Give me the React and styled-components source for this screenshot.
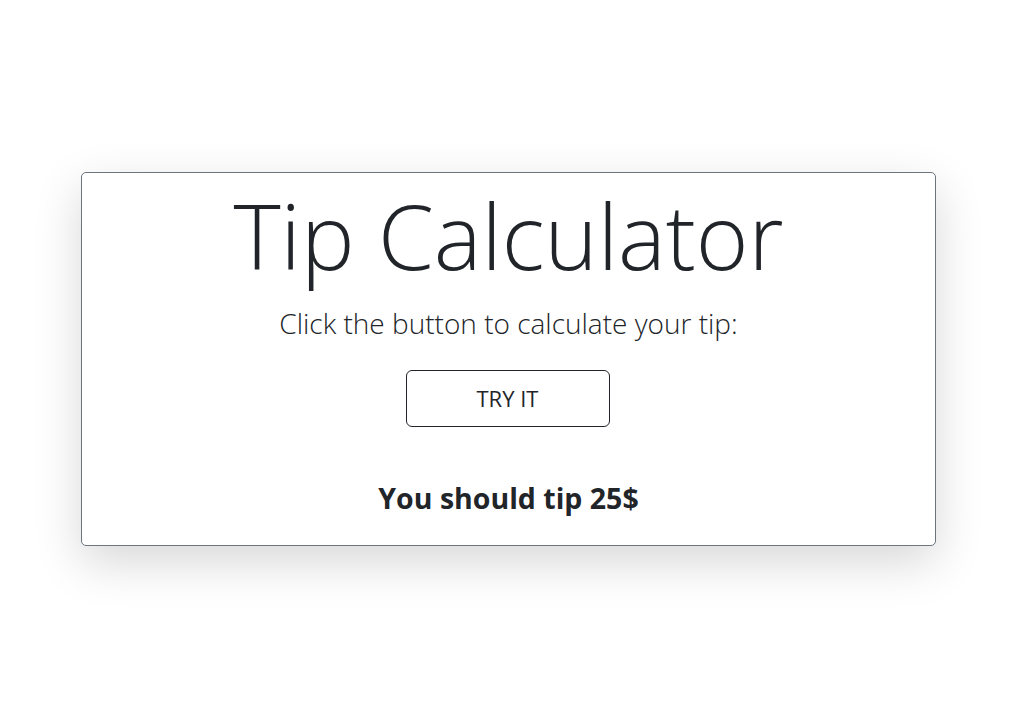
import React, { useState } from 'react';
import styled, { createGlobalStyle } from 'styled-components';

const GlobalStyle = createGlobalStyle`
  html, body {
    margin: 0;
    padding: 0;
    background: #fff;
    font-family: "Open Sans", "Noto Sans", sans-serif;
    color: #212529;
  }
`;

const Page = styled.main`
  height: 706px;
  display: flex;
  align-items: flex-start;
  justify-content: flex-start;
  padding: 172px 0 0 81px;
  box-sizing: border-box;
`;

const Card = styled.section`
  width: 855px;
  height: 374px;
  box-sizing: border-box;
  border: 1px solid #6c757d;
  border-radius: 5px;
  background: #fff;
  box-shadow: 0 1rem 3rem rgba(0, 0, 0, 0.16);
  display: flex;
  flex-direction: column;
  align-items: center;
  padding-top: 8px;
`;

const Title = styled.h1`
  margin: 0;
  font-size: 90px;
  font-weight: 300;
  line-height: 1.2;
`;

const Lead = styled.p`
  margin: 18px 0 0;
  font-size: 28px;
  font-weight: 300;
  line-height: 1.2;
`;

const Button = styled.button`
  margin-top: 29px;
  margin-right: 2px;
  width: 204px;
  height: 57px;
  background: #fff;
  border: 1px solid #212529;
  border-radius: 6px;
  font-family: inherit;
  font-size: 22px;
  color: #212529;
  cursor: pointer;
`;

const Result = styled.h2`
  margin: 54px 0 0;
  font-size: 28.5px;
  font-weight: 700;
  line-height: 1.2;
`;

export default function App() {
  const [tip] = useState(25);
  return (
    <>
      <GlobalStyle />
      <Page>
        <Card>
          <Title>Tip Calculator</Title>
          <Lead>Click the button to calculate your tip:</Lead>
          <Button>TRY IT</Button>
          <Result>You should tip {tip}$</Result>
        </Card>
      </Page>
    </>
  );
}
